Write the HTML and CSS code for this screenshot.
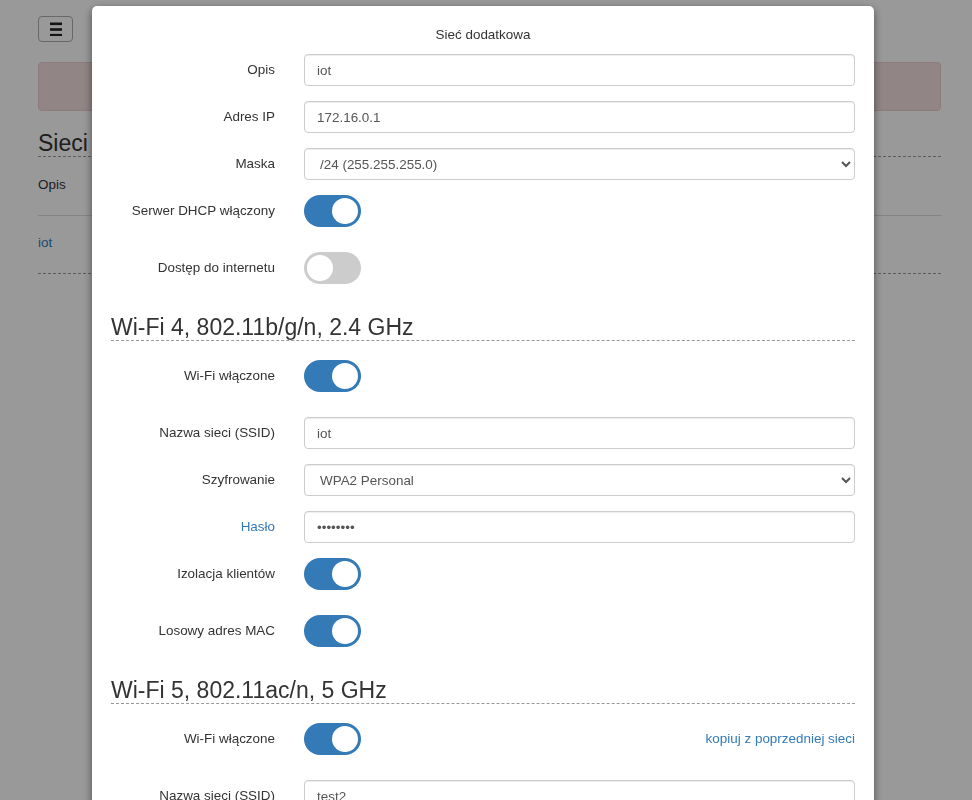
FILE: index.html
```html
<!DOCTYPE html>
<html lang="pl">
<head>
<meta charset="utf-8">
<title>Sieci</title>
<link rel="stylesheet" href="styles.css">
</head>
<body>
<div class="page">
  <button class="menu-btn" type="button" aria-label="Menu"><svg width="12" height="14" viewBox="0 0 12 14"><rect x="0" y="0.5" width="12" height="2.6" fill="#222"/><rect x="0" y="6.2" width="12" height="2.6" fill="#222"/><rect x="0" y="11.9" width="12" height="2.6" fill="#222"/></svg></button>
  <div class="alert"></div>
  <h2 class="page-title">Sieci</h2>
  <table class="net-table">
    <thead><tr><th>Opis</th></tr></thead>
    <tbody><tr><td><a href="#">iot</a></td></tr></tbody>
  </table>
</div>

<div class="overlay"></div>

<div class="modal">
  <div class="modal-title">Sieć dodatkowa</div>

  <div class="row">
    <label class="lbl">Opis</label>
    <div class="ctl"><input class="field" type="text" value="iot"></div>
  </div>
  <div class="row">
    <label class="lbl">Adres IP</label>
    <div class="ctl"><input class="field" type="text" value="172.16.0.1"></div>
  </div>
  <div class="row">
    <label class="lbl">Maska</label>
    <div class="ctl"><select class="field"><option>/24 (255.255.255.0)</option></select></div>
  </div>
  <div class="row toggle-row">
    <label class="lbl">Serwer DHCP włączony</label>
    <div class="ctl"><span class="switch on"><span class="knob"></span></span></div>
  </div>
  <div class="row toggle-row">
    <label class="lbl">Dostęp do internetu</label>
    <div class="ctl"><span class="switch"><span class="knob"></span></span></div>
  </div>

  <h3 class="section">Wi-Fi 4, 802.11b/g/n, 2.4 GHz</h3>

  <div class="row toggle-row">
    <label class="lbl">Wi-Fi włączone</label>
    <div class="ctl"><span class="switch on"><span class="knob"></span></span></div>
  </div>
  <div class="row">
    <label class="lbl">Nazwa sieci (SSID)</label>
    <div class="ctl"><input class="field" type="text" value="iot"></div>
  </div>
  <div class="row">
    <label class="lbl">Szyfrowanie</label>
    <div class="ctl"><select class="field"><option>WPA2 Personal</option></select></div>
  </div>
  <div class="row">
    <label class="lbl link-lbl">Hasło</label>
    <div class="ctl"><input class="field" type="password" value="12345678"></div>
  </div>
  <div class="row toggle-row">
    <label class="lbl">Izolacja klientów</label>
    <div class="ctl"><span class="switch on"><span class="knob"></span></span></div>
  </div>
  <div class="row toggle-row">
    <label class="lbl">Losowy adres MAC</label>
    <div class="ctl"><span class="switch on"><span class="knob"></span></span></div>
  </div>

  <h3 class="section">Wi-Fi 5, 802.11ac/n, 5 GHz</h3>

  <div class="row toggle-row">
    <label class="lbl">Wi-Fi włączone</label>
    <div class="ctl split"><span class="switch on"><span class="knob"></span></span><a class="copy" href="#">kopiuj z poprzedniej sieci</a></div>
  </div>
  <div class="row">
    <label class="lbl">Nazwa sieci (SSID)</label>
    <div class="ctl"><input class="field" type="text" value="test2"></div>
  </div>
  <div class="row">
    <label class="lbl">Szyfrowanie</label>
    <div class="ctl"><select class="field"><option>WPA2 Personal</option></select></div>
  </div>
</div>
</body>
</html>
```

FILE: styles.css
```css
html, body {
  margin: 0;
  padding: 0;
  background: #fff;
}
body {
  font-family: "Liberation Sans", Arial, sans-serif;
  font-size: 13.45px;
  line-height: 20px;
  color: #333;
  overflow: hidden;
  height: 800px;
}
a { color: #337ab7; text-decoration: none; }

.page {
  padding: 16px 31px 0 38px;
}
.menu-btn {
  display: flex;
  align-items: center;
  justify-content: center;
  width: 35px;
  height: 26px;
  padding: 0;
  border: 1px solid #adadad;
  border-radius: 4px;
  background: #fff;
}
.alert {
  margin-top: 20px;
  height: 49px;
  box-sizing: border-box;
  background: #f2dede;
  border: 1px solid #ebccd1;
  border-radius: 4px;
}
.page-title {
  margin: 20px 0 0;
  font-size: 23px;
  font-weight: normal;
  line-height: 25px;
  border-bottom: 1px dashed #999;
}
.net-table {
  width: 100%;
  border-collapse: collapse;
}
.net-table th {
  text-align: left;
  font-weight: normal;
  padding: 18px 0 20px;
  border-bottom: 1px solid #ddd;
}
.net-table td {
  padding: 17px 0 20px;
  border-bottom: 1px dashed #999;
}

.overlay {
  position: fixed;
  inset: 0;
  background: rgba(0, 0, 0, 0.4);
}

.modal {
  position: fixed;
  top: 6px;
  left: 92px;
  width: 782px;
  box-sizing: border-box;
  padding: 19px 19px 40px;
  background: #fff;
  border-radius: 5px;
  box-shadow: 0 3px 9px rgba(0, 0, 0, 0.5);
}
.modal-title {
  text-align: center;
  line-height: 20px;
  margin-bottom: 9px;
}
.row {
  display: grid;
  grid-template-columns: 164px 1fr;
  column-gap: 29px;
  margin-bottom: 15px;
}
.toggle-row {
  min-height: 42px;
}
.lbl {
  text-align: right;
  line-height: 32px;
  white-space: nowrap;
}
.link-lbl { color: #337ab7; }
.ctl {
  display: flex;
  align-items: flex-start;
}
.split {
  justify-content: space-between;
}
.copy {
  line-height: 32px;
}
.field {
  display: block;
  width: 100%;
  height: 32px;
  box-sizing: border-box;
  padding: 6px 12px;
  border: 1px solid #ccc;
  border-radius: 4px;
  background: #fff;
  box-shadow: inset 0 1px 1px rgba(0, 0, 0, 0.075);
  font-family: "Liberation Sans", Arial, sans-serif;
  font-size: 13.45px;
  color: #555;
}
select.field {
  padding: 6px 8px 6px 11px;
}
.switch {
  display: flex;
  justify-content: flex-start;
  align-items: center;
  width: 57px;
  height: 32px;
  box-sizing: border-box;
  padding: 3px;
  border-radius: 16px;
  background: #ccc;
}
.switch.on {
  background: #337ab7;
  justify-content: flex-end;
}
.knob {
  width: 26px;
  height: 26px;
  border-radius: 50%;
  background: #fff;
}
.section {
  margin: 20px 0 19px;
  font-size: 23px;
  font-weight: normal;
  line-height: 26px;
  border-bottom: 1px dashed #999;
}
```
